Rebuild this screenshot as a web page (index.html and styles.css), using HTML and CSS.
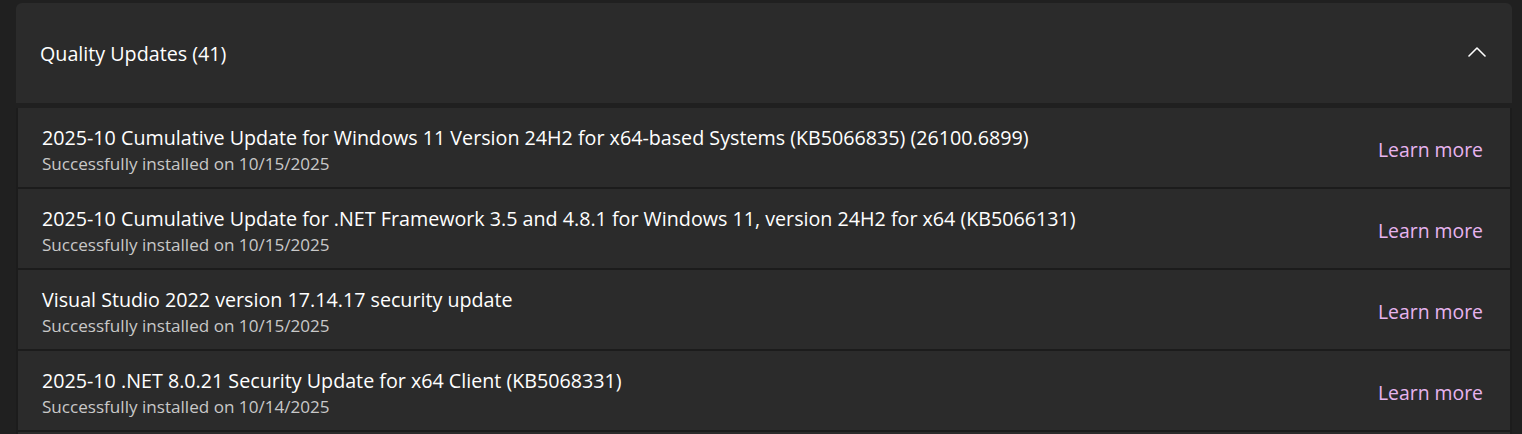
FILE: index.html
```html
<!DOCTYPE html>
<html lang="en">
<head>
<meta charset="utf-8">
<title>Update history</title>
<link rel="stylesheet" href="styles.css">
</head>
<body>
<div class="page">
  <div class="expander">
    <div class="expander-header">
      <span class="expander-title">Quality Updates (41)</span>
      <svg class="chevron" width="18" height="10" viewBox="0 0 18 10" aria-hidden="true">
        <path d="M1 9 L9 1 L17 9" fill="none" stroke="#ffffff" stroke-width="1.6" stroke-linecap="round" stroke-linejoin="round"/>
      </svg>
    </div>
    <div class="expander-body">
      <div class="update-row">
        <div class="update-text">
          <div class="update-title">2025-10 Cumulative Update for Windows 11 Version 24H2 for x64-based Systems (KB5066835) (26100.6899)</div>
          <div class="update-status">Successfully installed on 10/15/2025</div>
        </div>
        <a class="learn-more" href="#">Learn more</a>
      </div>
      <div class="update-row">
        <div class="update-text">
          <div class="update-title">2025-10 Cumulative Update for .NET Framework 3.5 and 4.8.1 for Windows 11, version 24H2 for x64 (KB5066131)</div>
          <div class="update-status">Successfully installed on 10/15/2025</div>
        </div>
        <a class="learn-more" href="#">Learn more</a>
      </div>
      <div class="update-row">
        <div class="update-text">
          <div class="update-title">Visual Studio 2022 version 17.14.17 security update</div>
          <div class="update-status">Successfully installed on 10/15/2025</div>
        </div>
        <a class="learn-more" href="#">Learn more</a>
      </div>
      <div class="update-row">
        <div class="update-text">
          <div class="update-title">2025-10 .NET 8.0.21 Security Update for x64 Client (KB5068331)</div>
          <div class="update-status">Successfully installed on 10/14/2025</div>
        </div>
        <a class="learn-more" href="#">Learn more</a>
      </div>
      <div class="update-row update-row-next"></div>
    </div>
  </div>
</div>
</body>
</html>
```

FILE: styles.css
```css
html, body {
  margin: 0;
  padding: 0;
  background: #202020;
  height: 100%;
  overflow: hidden;
}

body {
  font-family: "Open Sans", "Noto Sans", "Liberation Sans", sans-serif;
  color: #ffffff;
}

.page {
  padding: 3px 10px 0 16px;
}

.expander {
  display: flex;
  flex-direction: column;
}

.expander-header {
  height: 100px;
  background: #2b2b2b;
  border-radius: 6px 6px 0 0;
  display: flex;
  align-items: center;
  justify-content: space-between;
  padding: 0 26px 0 24px;
}

.expander-title {
  font-size: 19.7px;
  line-height: 26px;
  margin-top: 2px;
  color: #ffffff;
}

.chevron {
  display: block;
  margin-top: -2px;
}

.expander-body {
  margin-top: 5px;
  background: #1c1c1c;
  padding: 0 2px;
  display: flex;
  flex-direction: column;
  gap: 2px;
}

.update-row {
  height: 79px;
  flex: 0 0 79px;
  background: #2b2b2b;
  display: flex;
  align-items: center;
  justify-content: space-between;
  padding: 0 27px 0 24px;
  box-sizing: border-box;
}

.update-text {
  display: flex;
  flex-direction: column;
  padding-top: 4px;
}

.update-title {
  font-size: 19.7px;
  line-height: 26px;
  color: #ffffff;
}

.update-status {
  font-size: 17.1px;
  line-height: 22px;
  margin-top: 2px;
  color: #c8c8c8;
}

.learn-more {
  font-size: 19.4px;
  margin-top: 4px;
  color: #e7b4ef;
  text-decoration: none;
}
```
